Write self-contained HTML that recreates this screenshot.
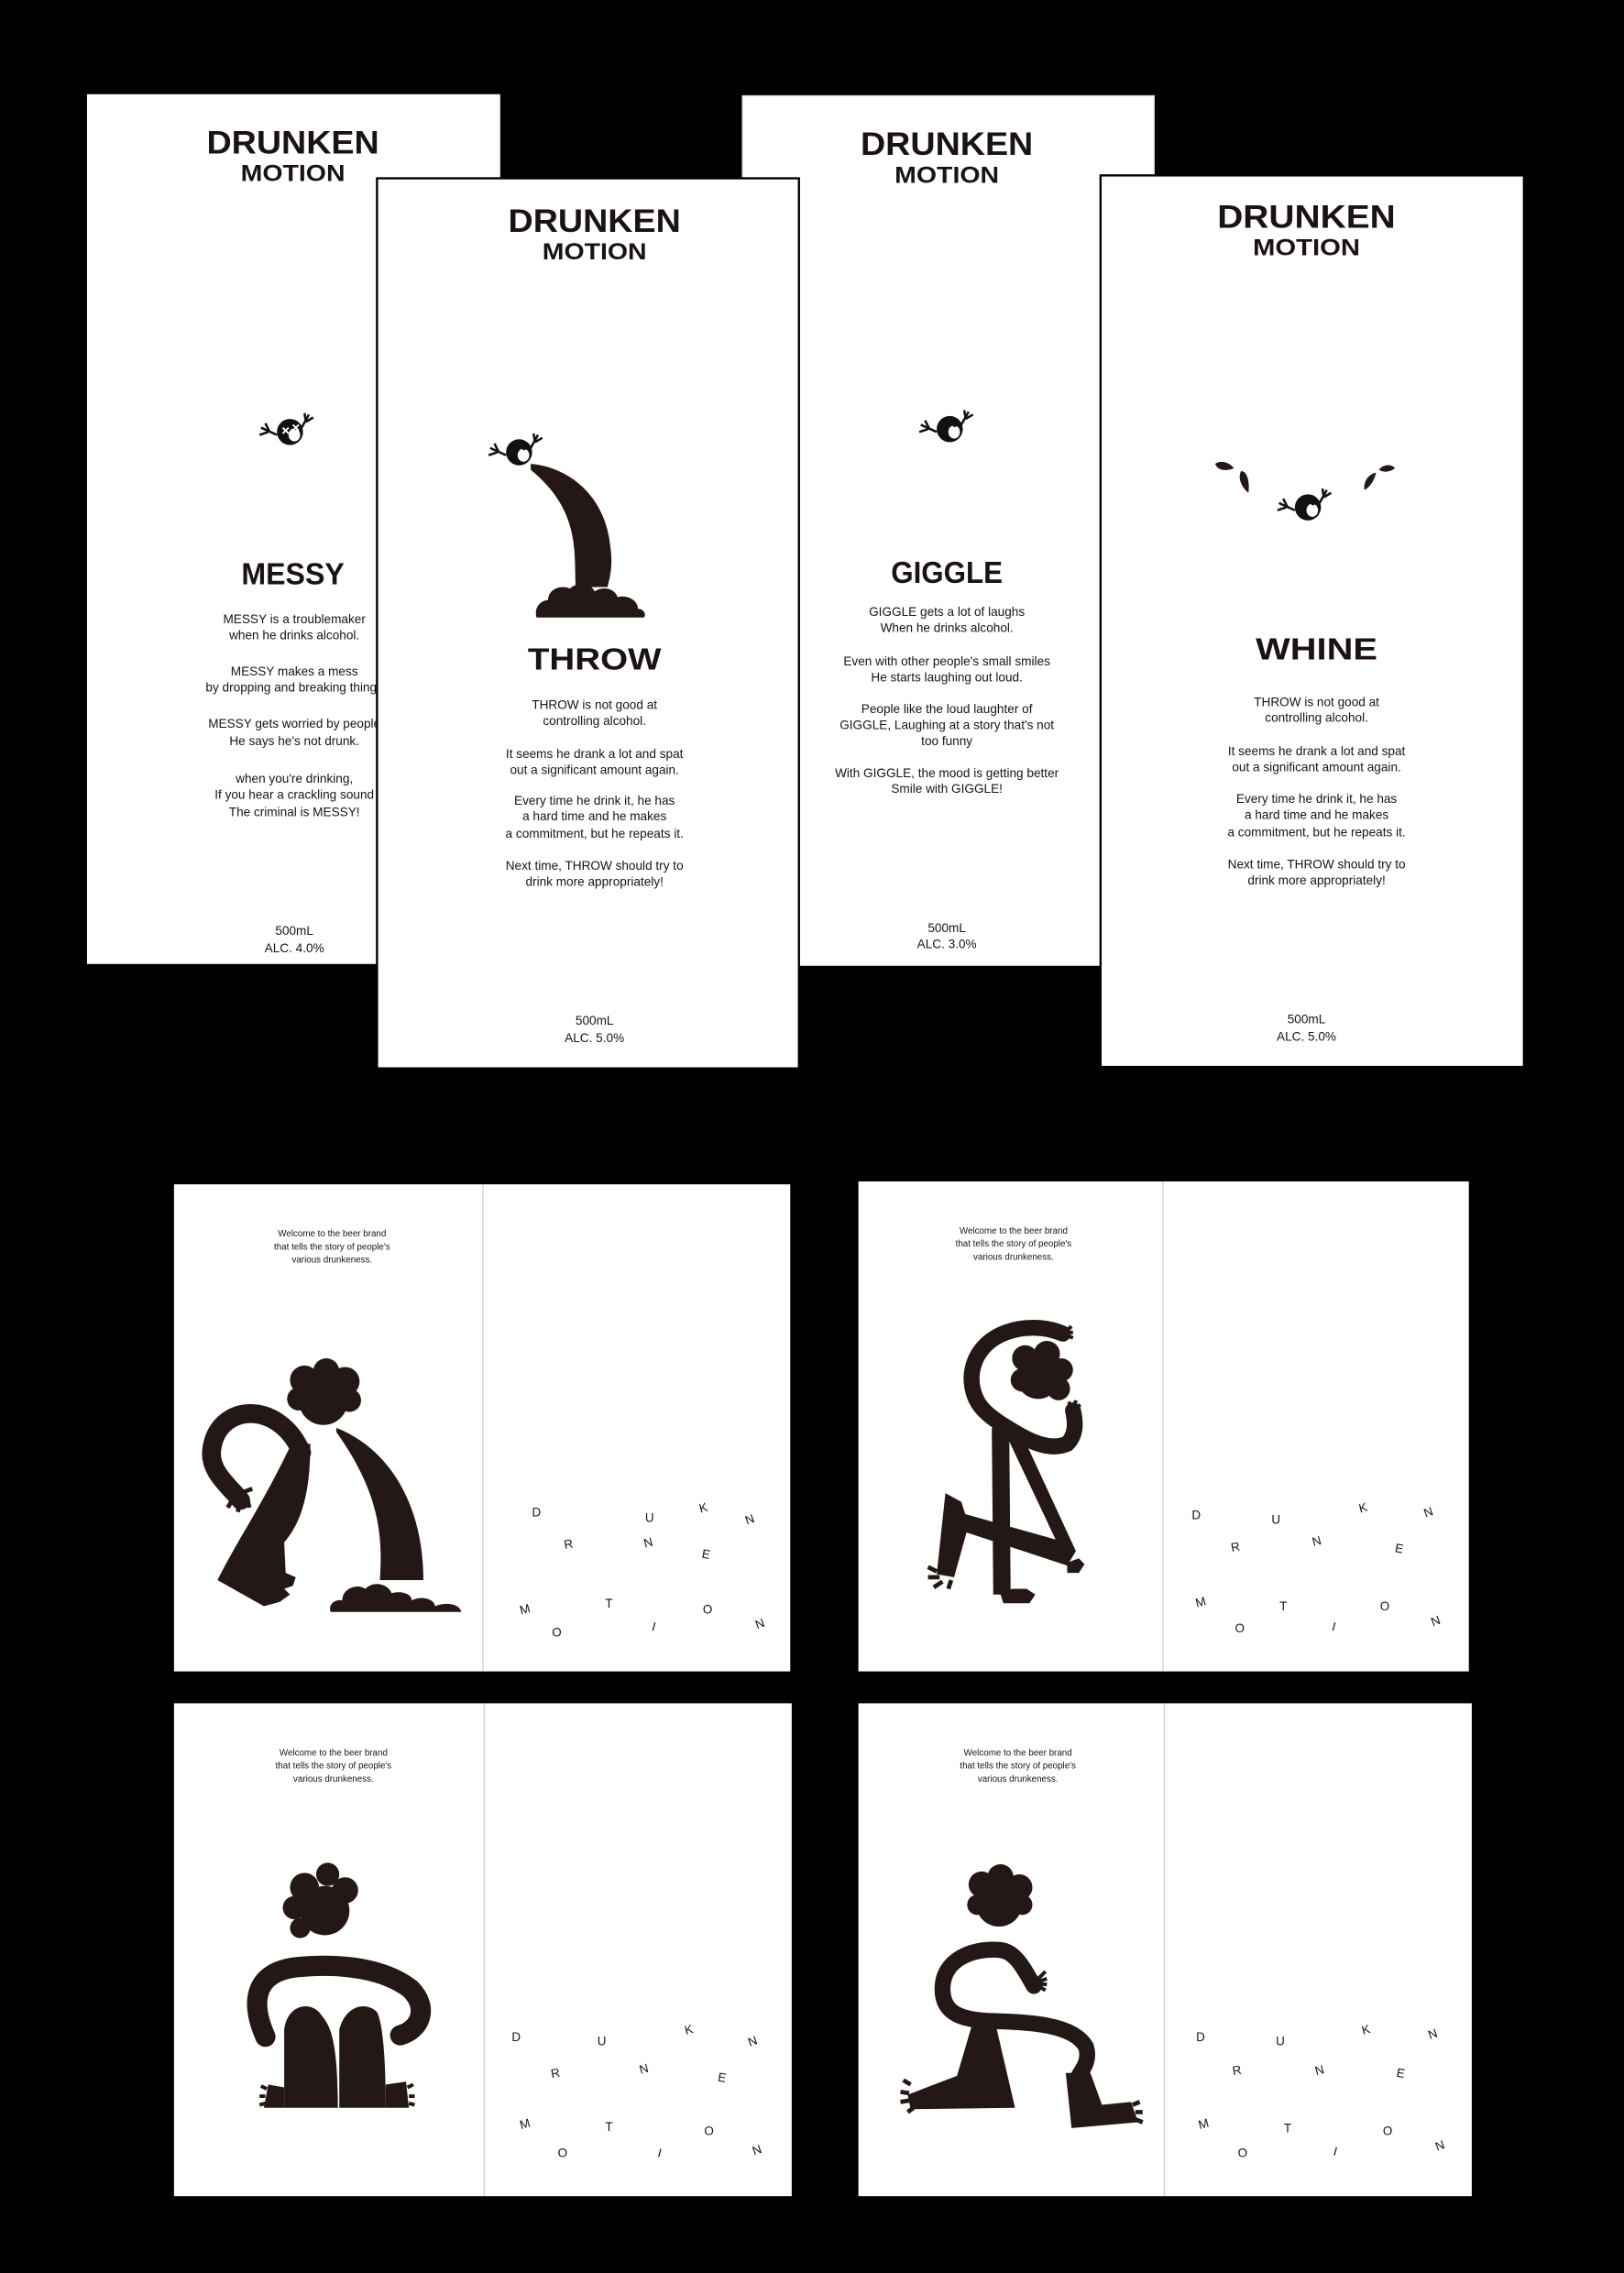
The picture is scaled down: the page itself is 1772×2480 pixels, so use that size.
<!DOCTYPE html>
<html><head><meta charset="utf-8">
<style>
html,body{margin:0;padding:0;background:#000;}
svg{display:block;}
text{font-family:"Liberation Sans",sans-serif;fill:#1a1311;}
.b{font-size:8.6px;text-anchor:middle;}
.logo1{font-size:22px;font-weight:bold;text-anchor:middle;}
.logo2{font-size:15.5px;font-weight:bold;text-anchor:middle;}
.t{font-size:21px;font-weight:bold;text-anchor:middle;}
.w{font-size:6.2px;text-anchor:middle;}
.l{font-size:8.5px;text-anchor:middle;}
.f{fill:#231815;}
</style></head>
<body>
<svg width="1772" height="2480" viewBox="0 0 1120 1568" preserveAspectRatio="none" xmlns="http://www.w3.org/2000/svg">
<defs>
<g id="face">
  <circle cx="0" cy="0" r="9" fill="#111"/>
  <ellipse cx="3" cy="2" rx="4" ry="4.5" fill="#fff"/>
  <circle cx="3.5" cy="-3" r="1.6" fill="#111"/>
  <path d="M-9 2 L-20 -3 M-14 0 L-17 -6 M-15 0 L-21 2 M8 -3 L13 -12 M11 -7 L10 -13 M11 -7 L16 -10" stroke="#111" stroke-width="1.6" fill="none"/>
</g>
</defs>
<rect width="1120" height="1568" fill="#000"/>

<!-- Card 1 MESSY -->
<rect x="60" y="65" width="285" height="600" fill="#fff"/>
<text x="202" y="106" class="logo1" textLength="119" lengthAdjust="spacingAndGlyphs">DRUNKEN</text>
<text x="202" y="125" class="logo2" textLength="72" lengthAdjust="spacingAndGlyphs">MOTION</text>
<use href="#face" x="200" y="298"/>
<path d="M195 295 l4 4 M199 295 l-4 4 M202 293 l4 4 M206 293 l-4 4" stroke="#fff" stroke-width="1.2"/>
<text x="202" y="403" class="t" textLength="71" lengthAdjust="spacingAndGlyphs">MESSY</text>
<text x="203" y="430" class="b">MESSY is a troublemaker</text>
<text x="203" y="441" class="b">when he drinks alcohol.</text>
<text x="203" y="466" class="b">MESSY makes a mess</text>
<text x="203" y="477" class="b">by dropping and breaking things</text>
<text x="203" y="502" class="b">MESSY gets worried by people</text>
<text x="203" y="514" class="b">He says he's not drunk.</text>
<text x="203" y="540" class="b">when you're drinking,</text>
<text x="203" y="551" class="b">If you hear a crackling sound</text>
<text x="203" y="563" class="b">The criminal is MESSY!</text>
<text x="203" y="645" class="b">500mL</text>
<text x="203" y="657" class="b">ALC. 4.0%</text>

<!-- Card 3 GIGGLE (behind card 2) -->
<rect x="512" y="66" width="284" height="600" fill="#fff" stroke="#ccc" stroke-width="0.8"/>
<text x="653" y="107" class="logo1" textLength="119" lengthAdjust="spacingAndGlyphs">DRUNKEN</text>
<text x="653" y="126" class="logo2" textLength="72" lengthAdjust="spacingAndGlyphs">MOTION</text>
<use href="#face" x="655" y="296"/>
<text x="653" y="402" class="t" textLength="77" lengthAdjust="spacingAndGlyphs">GIGGLE</text>
<text x="653" y="425" class="b">GIGGLE gets a lot of laughs</text>
<text x="653" y="436" class="b">When he drinks alcohol.</text>
<text x="653" y="459" class="b">Even with other people's small smiles</text>
<text x="653" y="470" class="b">He starts laughing out loud.</text>
<text x="653" y="492" class="b">People  like the loud laughter of</text>
<text x="653" y="503" class="b">GIGGLE, Laughing at a story that's not</text>
<text x="653" y="514" class="b">too funny</text>
<text x="653" y="536" class="b">With GIGGLE, the mood is getting better</text>
<text x="653" y="547" class="b">Smile with GIGGLE!</text>
<text x="653" y="643" class="b">500mL</text>
<text x="653" y="654" class="b">ALC. 3.0%</text>

<!-- Card 2 THROW -->
<rect x="260" y="123" width="291" height="614" fill="#fff" stroke="#000" stroke-width="1.5"/>
<text x="410" y="160" class="logo1" textLength="119" lengthAdjust="spacingAndGlyphs">DRUNKEN</text>
<text x="410" y="179" class="logo2" textLength="72" lengthAdjust="spacingAndGlyphs">MOTION</text>
<use href="#face" x="358" y="312"/>
<path class="f" d="M366 320 C392 322 418 342 421 378 C423 392 420 400 419 405 L397 405 C396 380 400 352 366 324 Z"/>
<path class="f" d="M370 426 C368 418 374 414 378 414 C378 407 386 403 393 406 C398 401 408 402 410 408 C416 404 424 406 426 412 C432 410 440 414 440 420 C444 420 446 424 444 426 Z"/>
<text x="410" y="462" class="t" textLength="92" lengthAdjust="spacingAndGlyphs">THROW</text>
<text x="410" y="489" class="b">THROW is not good at</text>
<text x="410" y="500" class="b">controlling alcohol.</text>
<text x="410" y="523" class="b">It seems he drank a lot and spat</text>
<text x="410" y="534" class="b">out a significant amount again.</text>
<text x="410" y="555" class="b">Every time he drink it, he has</text>
<text x="410" y="566" class="b">a hard time and he makes</text>
<text x="410" y="578" class="b">a commitment, but he repeats it.</text>
<text x="410" y="600" class="b">Next time, THROW should try to</text>
<text x="410" y="611" class="b">drink more appropriately!</text>
<text x="410" y="707" class="b">500mL</text>
<text x="410" y="719" class="b">ALC. 5.0%</text>

<!-- Card 4 WHINE -->
<rect x="759" y="121" width="292" height="615" fill="#fff" stroke="#000" stroke-width="1.5"/>
<text x="901" y="157" class="logo1" textLength="123" lengthAdjust="spacingAndGlyphs">DRUNKEN</text>
<text x="901" y="176" class="logo2" textLength="74" lengthAdjust="spacingAndGlyphs">MOTION</text>
<use href="#face" x="902" y="350"/>
<path class="f" d="M838 320 C842 317 848 319 851 323 C846 325 840 325 838 320 Z"/>
<path class="f" d="M856 325 C860 325 862 332 861 340 C857 337 853 330 856 325 Z"/>
<path class="f" d="M941 338 C940 332 944 327 949 326 C948 331 945 336 941 338 Z"/>
<path class="f" d="M951 324 C954 320 960 320 962 323 C958 326 954 326 951 324 Z"/>
<text x="908" y="455" class="t" textLength="84" lengthAdjust="spacingAndGlyphs">WHINE</text>
<text x="908" y="487" class="b">THROW is not good at</text>
<text x="908" y="498" class="b">controlling alcohol.</text>
<text x="908" y="521" class="b">It seems he drank a lot and spat</text>
<text x="908" y="532" class="b">out a significant amount again.</text>
<text x="908" y="554" class="b">Every time he drink it, he has</text>
<text x="908" y="565" class="b">a hard time and he makes</text>
<text x="908" y="577" class="b">a commitment, but he repeats it.</text>
<text x="908" y="599" class="b">Next time, THROW should try to</text>
<text x="908" y="610" class="b">drink more appropriately!</text>
<text x="901" y="706" class="b">500mL</text>
<text x="901" y="718" class="b">ALC. 5.0%</text>

<!-- Panels -->
<rect x="120" y="817" width="425" height="336" fill="#fff"/>
<line x1="333" y1="817" x2="333" y2="1153" stroke="#d8d4d4" stroke-width="1"/>
<rect x="592" y="815" width="421" height="338" fill="#fff"/>
<line x1="802" y1="815" x2="802" y2="1153" stroke="#d8d4d4" stroke-width="1"/>
<rect x="120" y="1175" width="426" height="340" fill="#fff"/>
<line x1="334" y1="1175" x2="334" y2="1515" stroke="#d8d4d4" stroke-width="1"/>
<rect x="592" y="1175" width="423" height="340" fill="#fff"/>
<line x1="803" y1="1175" x2="803" y2="1515" stroke="#d8d4d4" stroke-width="1"/>

<text x="229" y="853" class="w">Welcome to the beer brand</text>
<text x="229" y="862" class="w">that tells the story of people's</text>
<text x="229" y="871" class="w">various drunkeness.</text>
<text x="699" y="851" class="w">Welcome to the beer brand</text>
<text x="699" y="860" class="w">that tells the story of people's</text>
<text x="699" y="869" class="w">various drunkeness.</text>
<text x="230" y="1211" class="w">Welcome to the beer brand</text>
<text x="230" y="1220" class="w">that tells the story of people's</text>
<text x="230" y="1229" class="w">various drunkeness.</text>
<text x="702" y="1211" class="w">Welcome to the beer brand</text>
<text x="702" y="1220" class="w">that tells the story of people's</text>
<text x="702" y="1229" class="w">various drunkeness.</text>

<g class="l">
<text x="370" y="1046">D</text><text x="448" y="1050">U</text><text x="485" y="1043" transform="rotate(-15 485 1040)">K</text><text x="517" y="1051" transform="rotate(-20 517 1048)">N</text>
<text x="392" y="1068" transform="rotate(-10 392 1065)">R</text><text x="447" y="1067" transform="rotate(-15 447 1064)">N</text><text x="487" y="1075" transform="rotate(10 487 1072)">E</text>
<text x="362" y="1113" transform="rotate(-15 362 1110)">M</text><text x="420" y="1109">T</text><text x="488" y="1113">O</text>
<text x="384" y="1129">O</text><text x="451" y="1125" transform="rotate(15 451 1122)">I</text><text x="524" y="1123" transform="rotate(-20 524 1120)">N</text>

<text x="825" y="1048">D</text><text x="880" y="1051">U</text><text x="940" y="1043" transform="rotate(-15 940 1040)">K</text><text x="985" y="1046" transform="rotate(-20 985 1043)">N</text>
<text x="852" y="1070" transform="rotate(-10 852 1067)">R</text><text x="908" y="1066" transform="rotate(-15 908 1063)">N</text><text x="965" y="1071" transform="rotate(10 965 1068)">E</text>
<text x="828" y="1108" transform="rotate(-15 828 1105)">M</text><text x="885" y="1111">T</text><text x="955" y="1111">O</text>
<text x="855" y="1126">O</text><text x="920" y="1125" transform="rotate(15 920 1122)">I</text><text x="990" y="1121" transform="rotate(-20 990 1118)">N</text>

<text x="356" y="1408">D</text><text x="415" y="1411">U</text><text x="475" y="1403" transform="rotate(-15 475 1400)">K</text><text x="519" y="1411" transform="rotate(-20 519 1408)">N</text>
<text x="383" y="1433" transform="rotate(-10 383 1430)">R</text><text x="444" y="1430" transform="rotate(-15 444 1427)">N</text><text x="498" y="1436" transform="rotate(10 498 1433)">E</text>
<text x="362" y="1468" transform="rotate(-15 362 1465)">M</text><text x="420" y="1470">T</text><text x="489" y="1473">O</text>
<text x="388" y="1488">O</text><text x="455" y="1488" transform="rotate(15 455 1485)">I</text><text x="522" y="1486" transform="rotate(-20 522 1483)">N</text>

<text x="828" y="1408">D</text><text x="883" y="1411">U</text><text x="942" y="1403" transform="rotate(-15 942 1400)">K</text><text x="988" y="1406" transform="rotate(-20 988 1403)">N</text>
<text x="853" y="1431" transform="rotate(-10 853 1428)">R</text><text x="910" y="1431" transform="rotate(-15 910 1428)">N</text><text x="966" y="1433" transform="rotate(10 966 1430)">E</text>
<text x="830" y="1468" transform="rotate(-15 830 1465)">M</text><text x="888" y="1471">T</text><text x="957" y="1473">O</text>
<text x="857" y="1488">O</text><text x="921" y="1487" transform="rotate(15 921 1484)">I</text><text x="993" y="1483" transform="rotate(-20 993 1480)">N</text>
</g>

<!-- Panel 1 figure -->
<g class="f">
  <circle cx="223" cy="966" r="17"/><circle cx="210" cy="952" r="10"/><circle cx="225" cy="946" r="9"/><circle cx="238" cy="953" r="10"/><circle cx="206" cy="965" r="8"/><circle cx="241" cy="966" r="8"/>
  <path d="M208 1002 C192 965 150 968 146 1000 C144 1015 158 1025 166 1035" fill="none" stroke="#231815" stroke-width="13" stroke-linecap="round"/>
  <path d="M162 1032 l-5 8 M166 1034 l-2 9 M170 1032 l2 8 M166 1030 l8 -3"  stroke="#231815" stroke-width="3"/>
  <path d="M201 996 L214 996 C214 1030 208 1050 196 1064 L197 1085 L204 1088 L202 1094 L196 1096 L200 1100 L193 1105 L182 1108 L150 1090 C165 1060 180 1040 201 996 Z"/>
  <path d="M232 985 C270 1000 292 1040 292 1090 L262 1090 C264 1060 262 1030 232 988 Z"/>
  <path d="M228 1112 C226 1106 232 1103 236 1104 C236 1096 246 1092 252 1096 C258 1090 268 1093 270 1099 C278 1097 284 1100 284 1104 C292 1100 300 1104 300 1108 C310 1104 318 1108 318 1112 Z"/>
</g>

<!-- Panel 2 figure -->
<g class="f">
  <circle cx="716" cy="950" r="15"/><circle cx="707" cy="937" r="9"/><circle cx="722" cy="934" r="9"/><circle cx="732" cy="945" r="8"/><circle cx="705" cy="952" r="8"/><circle cx="730" cy="958" r="8"/>
  <path d="M733 920 C710 910 672 918 670 950 C670 968 680 975 690 982 C706 992 722 1002 736 996 C742 990 742 982 740 973" fill="none" stroke="#231815" stroke-width="11" stroke-linecap="round"/>
  <path d="M733 920 l6 -5 M733 920 l7 -1 M733 920 l7 3 M740 973 l-3 -6 M740 973 l2 -7 M740 973 l5 -4" stroke="#231815" stroke-width="2.5"/>
  <path d="M684 985 L696 985 L697 1100 L685 1100 Z"/>
  <path d="M694 990 L705 990 L742 1070 L736 1080 L660 1055 L664 1044 L728 1062 Z"/>
  <path d="M652 1030 L663 1036 L668 1052 L658 1088 L646 1086 Z"/>
  <path d="M646 1084 l-6 -3 M648 1088 l-8 0 M650 1091 l-6 4 M656 1090 l-2 6" stroke="#231815" stroke-width="3"/>
  <path d="M690 1100 l8 -4 l10 0 l6 4 l-4 6 l-18 0 Z"/>
  <path d="M736 1078 l8 -3 l4 4 l-4 6 l-8 0 Z"/>
</g>

<!-- Panel 3 figure -->
<g class="f">
  <circle cx="224" cy="1318" r="17"/><circle cx="210" cy="1302" r="10"/><circle cx="226" cy="1293" r="8"/><circle cx="238" cy="1304" r="9"/><circle cx="203" cy="1316" r="8"/><circle cx="207" cy="1330" r="7"/>
  <path d="M183 1405 C172 1380 176 1360 205 1357 C235 1354 265 1358 283 1372 C296 1385 290 1400 276 1404" fill="none" stroke="#231815" stroke-width="14" stroke-linecap="round"/>
  <path d="M196 1454 L196 1400 C198 1384 212 1380 220 1388 C226 1396 233 1400 233 1454 Z"/>
  <path d="M234 1454 L234 1400 C238 1384 252 1380 260 1388 C264 1396 266 1420 266 1454 Z"/>
  <path d="M185 1438 L196 1440 L196 1454 L182 1454 Z M266 1438 L280 1436 L282 1454 L266 1454 Z"/>
  <path d="M184 1441 l-4 -2 M183 1446 l-4 0 M183 1451 l-4 1 M281 1440 l4 -2 M282 1446 l4 0 M282 1451 l4 1" stroke="#231815" stroke-width="2.5"/>
</g>

<!-- Panel 4 figure -->
<g class="f">
  <circle cx="689" cy="1313" r="16"/><circle cx="677" cy="1300" r="9"/><circle cx="690" cy="1295" r="9"/><circle cx="703" cy="1302" r="9"/><circle cx="674" cy="1314" r="7"/><circle cx="705" cy="1314" r="7"/>
  <path d="M713 1370 C706 1358 700 1345 688 1345 C670 1344 650 1352 650 1372 C650 1390 665 1393 680 1394 C710 1395 740 1396 749 1412 C752 1422 746 1428 744 1432" fill="none" stroke="#231815" stroke-width="11" stroke-linecap="round"/>
  <path d="M713 1368 L721 1360 M713 1368 l9 -3 M713 1368 l9 1 M713 1368 l8 5" stroke="#231815" stroke-width="2.5"/>
  <path d="M670 1398 L687 1398 L700 1454 L628 1455 L626 1445 L660 1432 Z"/>
  <path d="M628 1438 l-5 -3 M627 1444 l-6 -1 M627 1449 l-6 1 M630 1454 l-4 3" stroke="#231815" stroke-width="3"/>
  <path d="M735 1430 L752 1430 L760 1452 L780 1450 L785 1464 L739 1468 Z"/>
  <path d="M781 1452 l5 -2 M783 1457 l5 0 M783 1462 l5 2" stroke="#231815" stroke-width="3"/>
</g>
</svg>
</body></html>
